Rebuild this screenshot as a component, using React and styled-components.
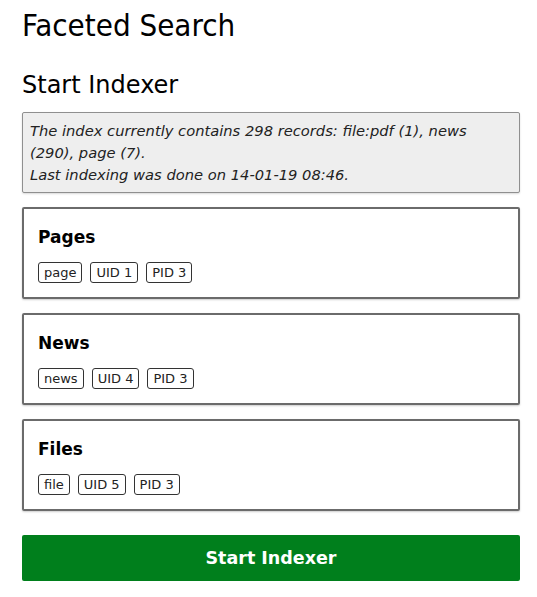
import React from "react"
import styled, { createGlobalStyle } from "styled-components"

const GlobalStyle = createGlobalStyle`
  html, body {
    margin: 0;
    padding: 0;
    background: #fff;
  }
  body {
    font-family: "DejaVu Sans", Verdana, sans-serif;
    color: #000;
  }
`

const Page = styled.div`
  width: 498px;
  padding: 7px 0 16px 22px;
`

const Title = styled.h1`
  margin: 0;
  font-family: "DejaVu Sans Condensed", "DejaVu Sans", sans-serif;
  font-size: 31px;
  font-weight: 400;
  line-height: 36px;
`

const SubTitle = styled.h2`
  margin: 28px 0 13px;
  font-size: 24px;
  font-weight: 400;
  line-height: 28px;
`

const InfoBox = styled.div`
  background: #eeeeee;
  border: 1px solid #8f8f8f;
  border-radius: 2px;
  box-shadow: 0 1px 2px rgba(0, 0, 0, 0.15);
  padding: 7px 7px 6px;
  font-size: 14.7px;
  font-style: italic;
  line-height: 22px;
  color: #222;
`

const SourceList = styled.div`
  display: flex;
  flex-direction: column;
  gap: 14px;
  margin-top: 14px;
`

const SourceCard = styled.div`
  border: 2px solid #6b6b6b;
  border-radius: 2px;
  box-shadow: 0 1px 2px rgba(0, 0, 0, 0.2);
  padding: 15px 14px 14px;
`

const SourceName = styled.h3`
  margin: 0 0 12px;
  font-size: 17px;
  font-weight: 700;
  line-height: 26px;
`

const Tags = styled.div`
  display: flex;
  gap: 8px;
`

const Tag = styled.span`
  border: 1px solid #333;
  border-radius: 3px;
  padding: 0 5px;
  font-size: 13px;
  line-height: 19px;
  color: #222;
`

const StartButton = styled.button`
  display: block;
  width: 100%;
  height: 46px;
  margin-top: 24px;
  border: none;
  border-radius: 2px;
  background: #007f1c;
  color: #fff;
  font-family: "DejaVu Sans", Verdana, sans-serif;
  font-size: 17.5px;
  font-weight: 700;
  cursor: pointer;
`

const sources = [
  { name: "Pages", type: "page", uid: 1, pid: 3 },
  { name: "News", type: "news", uid: 4, pid: 3 },
  { name: "Files", type: "file", uid: 5, pid: 3 },
]

const App = () => (
  <>
    <GlobalStyle />
    <Page>
      <Title>Faceted Search</Title>
      <SubTitle>Start Indexer</SubTitle>
      <InfoBox>
        The index currently contains 298 records: file:pdf (1), news (290), page (7).
        <br />
        Last indexing was done on 14-01-19 08:46.
      </InfoBox>
      <SourceList>
        {sources.map(source => (
          <SourceCard key={source.name}>
            <SourceName>{source.name}</SourceName>
            <Tags>
              <Tag>{source.type}</Tag>
              <Tag>UID {source.uid}</Tag>
              <Tag>PID {source.pid}</Tag>
            </Tags>
          </SourceCard>
        ))}
      </SourceList>
      <StartButton type="button">Start Indexer</StartButton>
    </Page>
  </>
)

export default App
